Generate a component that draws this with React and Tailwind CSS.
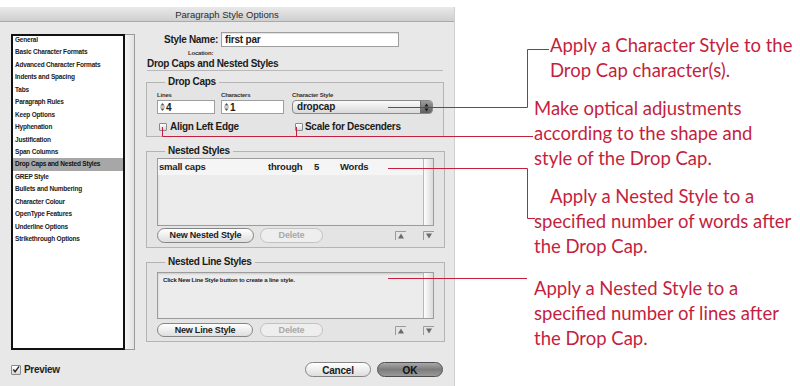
import React from 'react'

const RED = '#c41f3e'

const sections = [
  'General',
  'Basic Character Formats',
  'Advanced Character Formats',
  'Indents and Spacing',
  'Tabs',
  'Paragraph Rules',
  'Keep Options',
  'Hyphenation',
  'Justification',
  'Span Columns',
  'Drop Caps and Nested Styles',
  'GREP Style',
  'Bullets and Numbering',
  'Character Colour',
  'OpenType Features',
  'Underline Options',
  'Strikethrough Options',
]

function Spin() {
  return (
    <svg width="5" height="10" viewBox="0 0 5 10" className="shrink-0">
      <path d="M2.5 1 L4.5 3.5 L0.5 3.5 Z" fill="#555" />
      <path d="M0 5 H5" stroke="#777" strokeWidth="0.8" />
      <path d="M2.5 9 L4.5 6.5 L0.5 6.5 Z" fill="#555" />
    </svg>
  )
}

function Check({ checked = false, size = 'w-[8px] h-[8px]' }) {
  return (
    <span className={`${size} shrink-0 rounded-[1px] border border-[#8a8a8a] bg-gradient-to-b from-white to-[#d8d8d8] flex items-center justify-center`}>
      {checked && (
        <svg width="9" height="9" viewBox="0 0 9 9">
          <path d="M1.5 4.5 L3.5 7 L8 1" stroke="#2a2a2a" strokeWidth="1.6" fill="none" />
        </svg>
      )}
    </span>
  )
}

function Pill({ children, disabled = false, className = '' }) {
  return (
    <button
      type="button"
      className={`h-full rounded-full border text-[9px] font-bold tracking-[-0.2px] ${disabled ? 'border-[#c2c2c2] bg-[#eeeeee] text-[#a9a9a9]' : 'border-[#858585] bg-gradient-to-b from-white to-[#dedede] text-[#1c1c1c]'} ${className}`}
    >
      {children}
    </button>
  )
}

function ArrowBtn({ down = false }) {
  return (
    <svg width="11" height="9" viewBox="0 0 11 9">
      <path d="M0.5 9 V0.5 H11" stroke="#9a9a9a" fill="none" />
      {down ? <path d="M3 2.5 H9 L6 7.5 Z" fill="#6a6a6a" /> : <path d="M3 7.5 H9 L6 2.5 Z" fill="#6a6a6a" />}
    </svg>
  )
}

function Group({ title, className = '', children }) {
  return (
    <fieldset className={`ml-[1px] w-[297px] border border-[#b4b4b4] bg-[#e4e4e4] px-[10px] ${className}`}>
      <legend className="ml-[8px] px-[3px] text-[10px] leading-[12px] font-bold tracking-[-0.3px] text-[#1a1a1a]">{title}</legend>
      {children}
    </fieldset>
  )
}

function ListBox({ height, children }) {
  return (
    <div className={`${height} flex border border-[#9c9c9c] bg-[#ececec] shadow-[inset_0_1px_2px_rgba(0,0,0,0.15)]`}>
      <div className="flex-1 min-w-0">{children}</div>
      <div className="w-[10px] border-l border-[#b8b8b8] bg-gradient-to-r from-[#fdfdfd] to-[#dadada]" />
    </div>
  )
}

function Dialog() {
  return (
    <div className="mt-[7px] h-[379px] w-[455px] shrink-0 flex flex-col bg-[#e8e8e8] border-r border-[#cfcfcf] font-['Liberation_Sans',Arial,sans-serif] text-[#1c1c1c]">
      <div className="h-[15px] shrink-0 border-b border-[#aaaaaa] bg-gradient-to-b from-[#e9e9e9] to-[#cfcfcf] text-center text-[9.5px] leading-[15px] text-[#2a2a2a]">
        Paragraph Style Options
      </div>

      <div className="flex-1 flex flex-col px-[11px] pt-[10px]">
        <div className="flex gap-[10px]">
          <div className="mt-[2px] h-[316px] w-[124px] flex">
            <div className="w-[114px] border-2 border-[#111] bg-white">
              <ul className="-mt-[2px]">
                {sections.map((name) => (
                  <li
                    key={name}
                    className={`pl-[2px] text-[6.5px] leading-[12.44px] font-bold tracking-[-0.2px] ${name === 'Drop Caps and Nested Styles' ? 'bg-[#a7a7a7] text-[#111]' : 'text-[#222]'}`}
                  >
                    {name}
                  </li>
                ))}
              </ul>
            </div>
            <div className="w-[10px] border border-l-0 border-[#9a9a9a] bg-gradient-to-r from-[#f6f6f6] to-[#e2e2e2]" />
          </div>

          <div className="w-[300px] flex flex-col">
            <div className="h-[15px] flex items-center gap-[3px]">
              <span className="w-[73px] text-right text-[10px] font-bold tracking-[-0.3px]">Style Name:</span>
              <div className="h-[15px] w-[178px] border border-[#9e9e9e] bg-white pl-[3px] text-[10px] leading-[13px] font-bold tracking-[-0.2px] shadow-[inset_0_1px_1px_rgba(0,0,0,0.12)]">
                first par
              </div>
            </div>
            <div className="mt-[3px] h-[7px] pl-[43px] text-[6px] leading-[7px] font-bold tracking-[-0.2px] text-[#333]">Location:</div>
            <div className="mt-[1px] ml-[2px] w-[296px] h-[13px] border-b border-[#b9b9b9] text-[10px] leading-[12px] font-bold tracking-[-0.3px]">
              Drop Caps and Nested Styles
            </div>

            <Group title="Drop Caps" className="mt-[5px] pb-[5px]">
              <div className="mt-[3px] flex text-[6px] leading-[8px] font-bold tracking-[-0.2px] text-[#333]">
                <span className="w-[64px]">Lines</span>
                <span className="w-[71px]">Characters</span>
                <span>Character Style</span>
              </div>
              <div className="mt-[1px] h-[14px] flex">
                <div className="w-[58px] flex items-center gap-[1px] border border-[#9e9e9e] bg-white pl-[2px] text-[10px] font-bold">
                  <Spin />4
                </div>
                <div className="ml-[6px] w-[63px] flex items-center gap-[1px] border border-[#9e9e9e] bg-white pl-[2px] text-[10px] font-bold">
                  <Spin />1
                </div>
                <div className="ml-[8px] w-[141px] flex rounded-[4px] border border-[#8a8a8a] bg-gradient-to-b from-[#fbfbfb] to-[#d9d9d9] overflow-hidden">
                  <span className="flex-1 pl-[4px] text-[10px] leading-[12px] font-bold tracking-[-0.2px]">dropcap</span>
                  <span className="w-[12px] flex flex-col items-center justify-center gap-[1px] border-l border-[#6b6b6b] bg-gradient-to-b from-[#9b9b9b] to-[#5f5f5f]">
                    <svg width="5" height="9" viewBox="0 0 5 9">
                      <path d="M2.5 0.5 L4.5 3.5 L0.5 3.5 Z" fill="#1a1a1a" />
                      <path d="M2.5 8.5 L4.5 5.5 L0.5 5.5 Z" fill="#1a1a1a" />
                    </svg>
                  </span>
                </div>
              </div>
              <div className="mt-[8px] h-[9px] flex items-center text-[10px] font-bold tracking-[-0.3px]">
                <span className="ml-[2px] flex items-center gap-[3px] w-[136px]">
                  <Check />Align Left Edge
                </span>
                <span className="flex items-center gap-[2px]">
                  <Check />Scale for Descenders
                </span>
              </div>
            </Group>

            <Group title="Nested Styles" className="mt-[8px] pb-[4px]">
              <div className="mt-[1px]">
                <ListBox height="h-[68px]">
                  <div className="h-[16px] bg-[#f5f5f5] flex items-center text-[9.5px] font-bold tracking-[-0.2px] text-[#222]">
                    <span className="w-[110px] pl-[1px]">small caps</span>
                    <span className="w-[46px]">through</span>
                    <span className="w-[26px]">5</span>
                    <span>Words</span>
                  </div>
                </ListBox>
              </div>
              <div className="mt-[2px] h-[15px] flex items-center">
                <Pill className="w-[97px]">New Nested Style</Pill>
                <Pill disabled className="ml-[6px] w-[63px]">Delete</Pill>
                <span className="ml-[72px]"><ArrowBtn /></span>
                <span className="ml-[17px]"><ArrowBtn down /></span>
              </div>
            </Group>

            <Group title="Nested Line Styles" className="mt-[8px] pb-[4px]">
              <div className="mt-[4px]">
                <ListBox height="h-[47px]">
                  <p className="pl-[5px] pt-[3px] text-[6px] leading-[8px] font-bold tracking-[-0.15px] text-[#222]">
                    Click New Line Style button to create a line style.
                  </p>
                </ListBox>
              </div>
              <div className="mt-[4px] h-[14px] flex items-center">
                <Pill className="w-[96px]">New Line Style</Pill>
                <Pill disabled className="ml-[7px] w-[63px]">Delete</Pill>
                <span className="ml-[72px]"><ArrowBtn /></span>
                <span className="ml-[17px]"><ArrowBtn down /></span>
              </div>
            </Group>
          </div>
        </div>

        <div className="mt-[12px] h-[15px] flex items-center justify-between">
          <span className="flex items-center gap-[3px] text-[10px] font-bold tracking-[-0.3px] text-[#222]">
            <Check checked size="w-[10px] h-[10px]" />Preview
          </span>
          <div className="flex gap-[6px] h-[15px]">
            <Pill className="w-[66px] text-[10px]">Cancel</Pill>
            <button type="button" className="h-full w-[66px] rounded-full border border-[#4f4f4f] bg-gradient-to-b from-[#a9a9a9] via-[#7c7c7c] to-[#9a9a9a] text-[10px] font-bold text-[#111]">
              OK
            </button>
          </div>
        </div>
      </div>
    </div>
  )
}

export default function App() {
  return (
    <div className="relative w-[800px] h-[386px] bg-white flex overflow-hidden">
      <Dialog />

      <div className="flex-1 pl-[79px] pt-[33px] font-['Lato',sans-serif] text-[18.5px] leading-[25px] text-[#c41f3e] whitespace-nowrap">
        <p className="pl-[16px]">Apply a Character Style to the<br />Drop Cap character(s).</p>
        <p className="mt-[13px]">Make optical adjustments<br />according to the shape and<br />style of the Drop Cap.</p>
        <p className="mt-[13px]">
          <span className="pl-[16px]">Apply a Nested Style to a</span><br />specified number of words after<br />the Drop Cap.
        </p>
        <p className="mt-[17px]">Apply a Nested Style to a<br />specified number of lines after<br />the Drop Cap.</p>
      </div>

      <svg className="absolute left-0 top-0 pointer-events-none" width="800" height="386" viewBox="0 0 800 386">
        <g stroke={RED} strokeWidth="1" fill="none">
          <polyline points="388,107.5 527.5,107.5 527.5,49.5 549,49.5" />
          <polyline points="162.5,127 162.5,136.5 533,136.5" />
          <line x1="296.5" y1="127" x2="296.5" y2="136.5" />
          <polyline points="388,168.5 527.5,168.5 527.5,218.5 535,218.5" />
          <line x1="388" y1="278.5" x2="527" y2="278.5" />
        </g>
      </svg>
    </div>
  )
}
